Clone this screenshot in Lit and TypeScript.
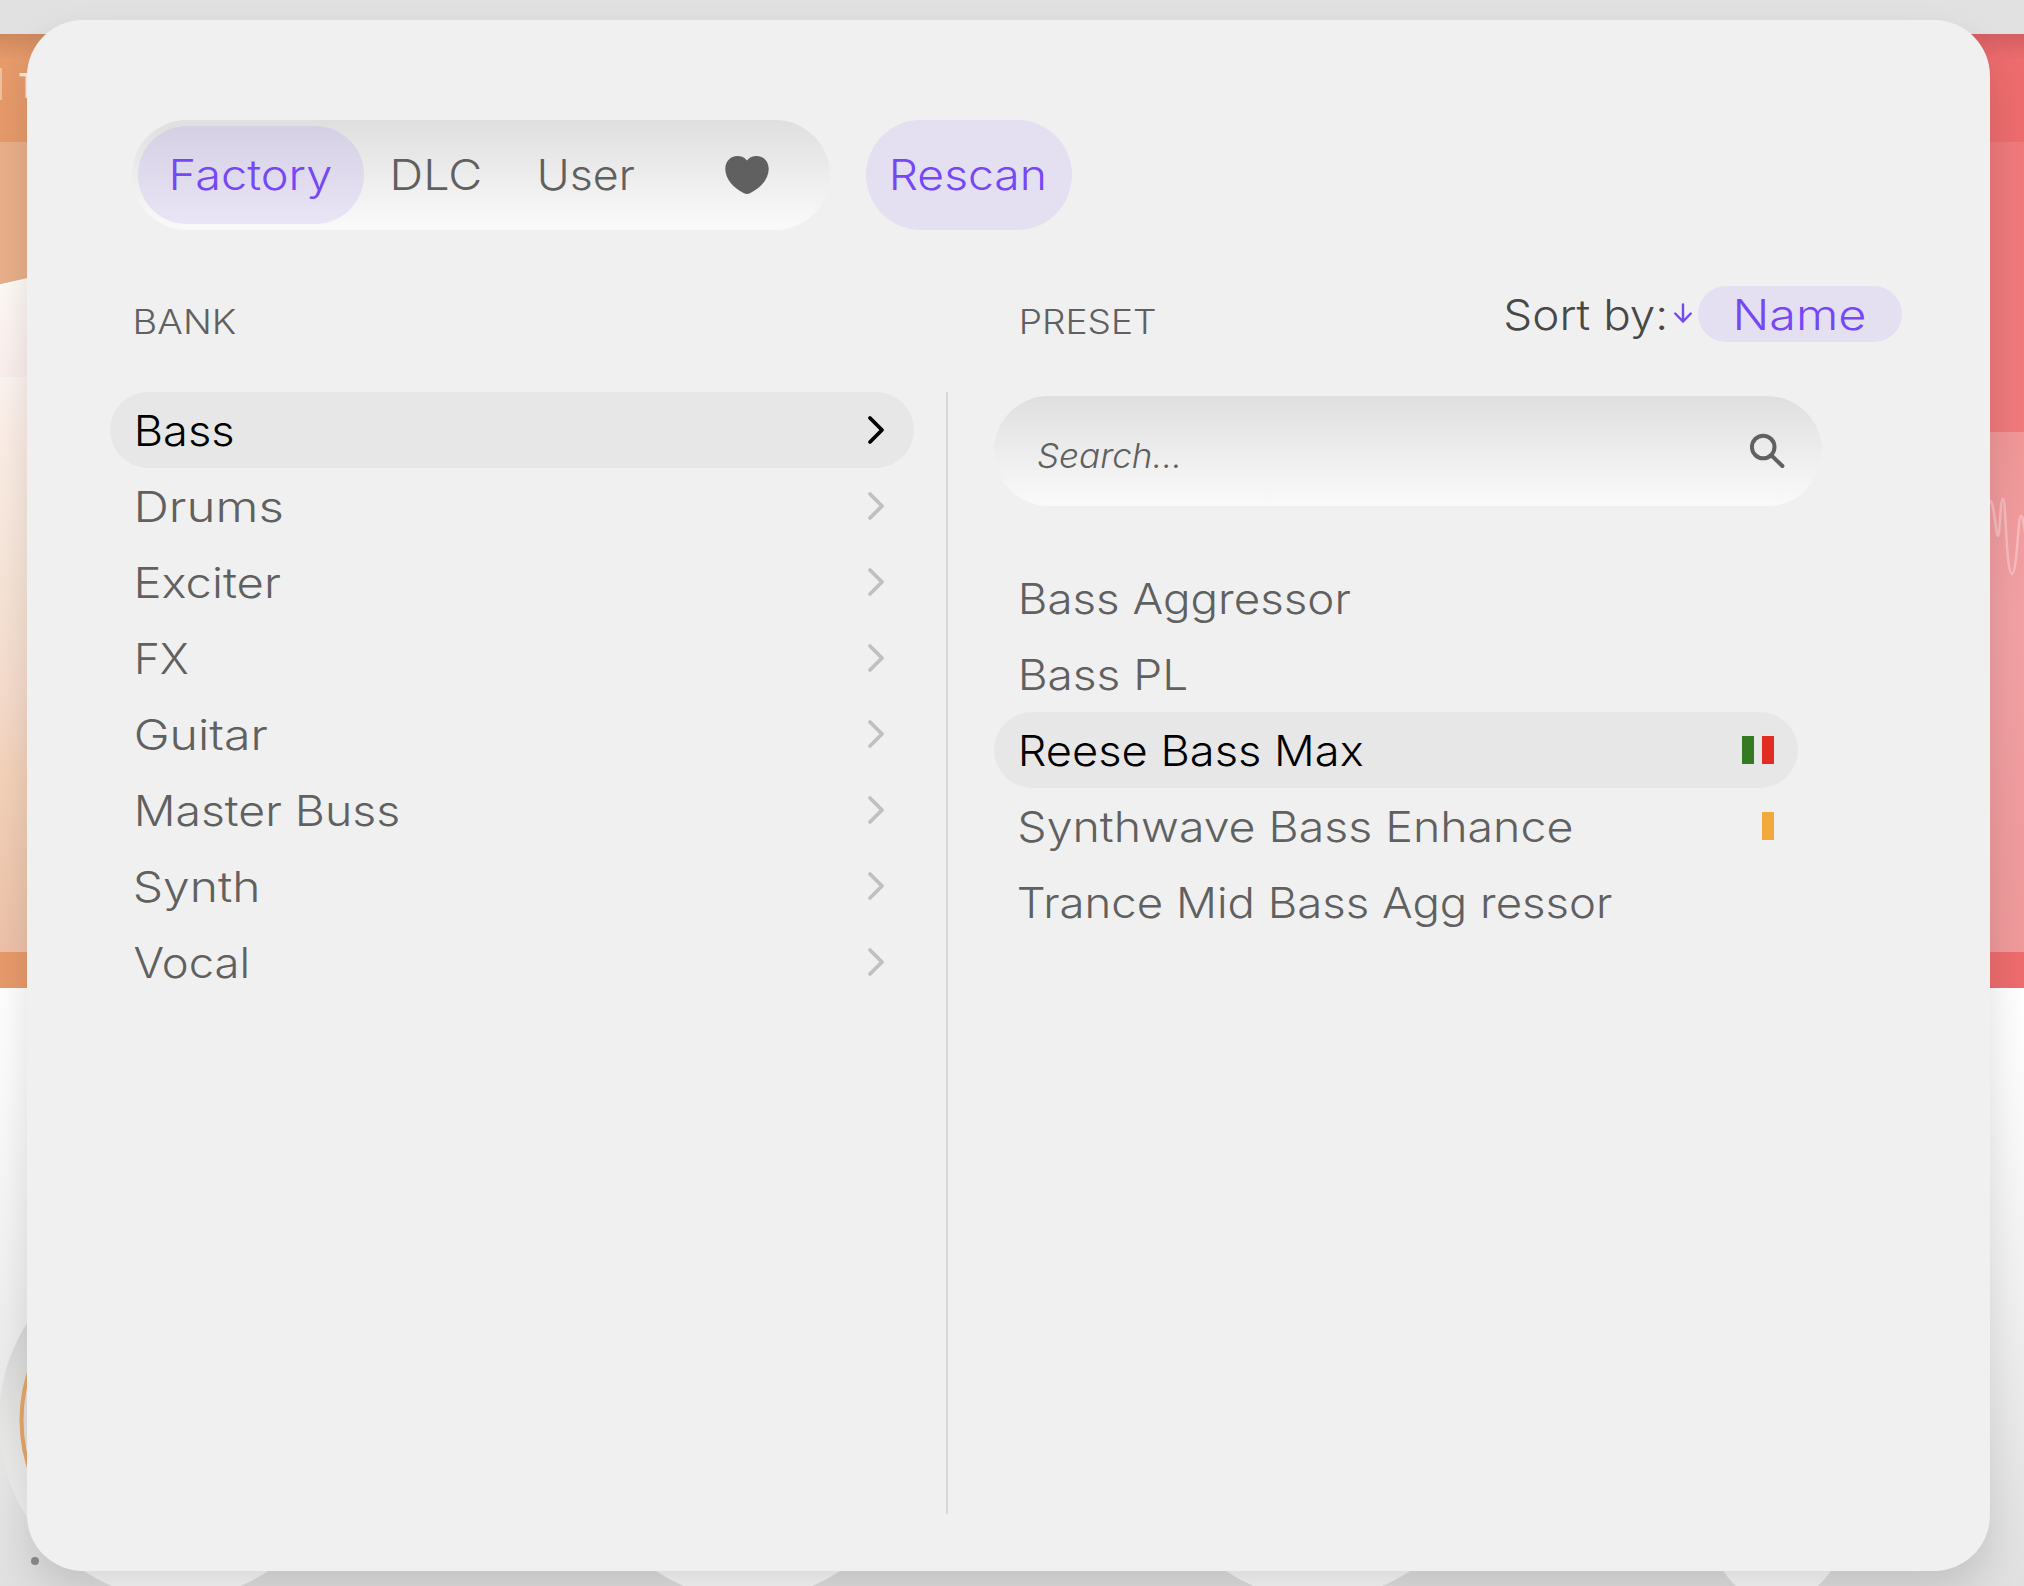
import { LitElement, html, css, svg } from "lit";
import { customElement, property, state } from "lit/decorators.js";
import { classMap } from "lit/directives/class-map.js";
import { styleMap } from "lit/directives/style-map.js";

/** A single-line label whose ink spans exactly `ink` pixels. */
@customElement("fit-label")
export class FitLabel extends LitElement {
  static styles = css`
    :host {
      display: inline-block;
      flex: none;
      text-align: left;
    }
    .text {
      display: inline-block;
      white-space: pre;
      transform-origin: 0 50%;
    }
  `;

  @property() text = "";
  @property({ type: Number }) ink = 100;
  /** Optical offset of the first letter. */
  @property({ type: Number }) nudge = 0;
  @state() private scale = 1;
  @state() private lead = 0;

  updated() {
    const cs = getComputedStyle(this);
    const ctx = document.createElement("canvas").getContext("2d")!;
    ctx.font = `${cs.fontStyle} ${cs.fontWeight} ${cs.fontSize} ${cs.fontFamily}`;
    const m = ctx.measureText(this.text);
    this.scale = this.ink / (m.actualBoundingBoxRight + m.actualBoundingBoxLeft);
    this.lead = m.actualBoundingBoxLeft;
  }

  render() {
    return html`<div style=${styleMap({ width: `${this.ink}px` })}><span
      class="text"
      style=${styleMap({ transform: `translateX(${this.nudge}px) scaleX(${this.scale}) translateX(${this.lead}px)` })}
      >${this.text}</span></div>`;
  }
}

interface Entry {
  name: string;
  ink: number;
  nudge?: number;
  marks?: string[];
}

const BANKS: Entry[] = [
  { name: "Bass", ink: 94.5 },
  { name: "Drums", ink: 143.5 },
  { name: "Exciter", ink: 142.5 },
  { name: "FX", ink: 49.5 },
  { name: "Guitar", ink: 131.5, nudge: -2 },
  { name: "Master Buss", ink: 260 },
  { name: "Synth", ink: 122, nudge: -3 },
  { name: "Vocal", ink: 112.5, nudge: -3.5 },
];

const PRESETS: Entry[] = [
  { name: "Bass Aggressor", ink: 328.5 },
  { name: "Bass PL", ink: 164 },
  { name: "Reese Bass Max", ink: 341, marks: ["green", "red"] },
  { name: "Synthwave Bass Enhance", ink: 552, nudge: -2.5, marks: ["amber"] },
  { name: "Trance Mid Bass Agg ressor", ink: 593, nudge: -3 },
];

@customElement("app-root")
export class AppRoot extends LitElement {
  static styles = css`
    :host {
      display: block;
      position: relative;
      width: 2024px;
      height: 1586px;
      overflow: hidden;
      font-family: Inter, "Open Sans", sans-serif;
      font-weight: 350;
      font-size: 42.6px;
      color: #606060;
    }
    .backdrop {
      position: absolute;
      inset: 0;
      display: block;
    }
    .panel {
      position: absolute;
      left: 27px;
      top: 20px;
      width: 1963px;
      height: 1551px;
      box-sizing: border-box;
      border-radius: 56px;
      background: #f0f0f0;
      box-shadow: 0 20px 40px rgba(0, 0, 0, 0.135);
      padding: 100px 88px 57px 83px;
      display: flex;
      flex-direction: column;
    }
    .toolbar {
      display: flex;
      gap: 36px;
      height: 110px;
      padding-left: 22px;
      line-height: 109px;
    }
    .segments {
      display: flex;
      width: 698px;
      box-sizing: border-box;
      padding: 6px;
      border-radius: 55px;
      background: linear-gradient(#dfdfdf, #fafafa);
      line-height: 97px;
    }
    .segment {
      height: 98px;
      border-radius: 49px;
      box-sizing: border-box;
    }
    .factory {
      width: 226px;
      padding-left: 35px;
      background: linear-gradient(#d5d0e3, #e9e5f7);
      color: #7547f5;
    }
    .dlc {
      width: 146px;
      padding-left: 30px;
    }
    .user {
      width: 180px;
      padding-left: 30px;
    }
    .fav {
      padding-left: 35px;
      display: flex;
      align-items: center;
    }
    .rescan {
      width: 206px;
      border-radius: 55px;
      background: #e4dff1;
      color: #7547f5;
      box-sizing: border-box;
      padding-left: 27px;
    }
    .titles {
      display: grid;
      grid-template-columns: 886px 484px 192px 230px;
      height: 56px;
      margin-top: 56px;
      padding-left: 26px;
      line-height: 58px;
    }
    .title {
      font-size: 33.6px;
      padding-top: 7px;
      margin-left: -0.5px;
    }
    .sort {
      color: #484848;
      display: flex;
      gap: 8px;
    }
    .sort svg {
      margin-top: 17px;
    }
    .sort-key {
      width: 204px;
      height: 56px;
      border-radius: 28px;
      background: #e4dff1;
      color: #7547f5;
      box-sizing: border-box;
      padding-left: 39px;
    }
    .columns {
      flex: 1;
      margin-top: 50px;
      display: grid;
      grid-template-columns: 804px 2px 828px;
      column-gap: 32px;
      min-height: 0;
    }
    .divider {
      background: #d8d8d8;
      height: 1122px;
    }
    .presets {
      padding: 4px 0 0 14px;
    }
    .row {
      width: 804px;
      height: 76px;
      line-height: 77px;
      box-sizing: border-box;
      padding: 0 24px 0 28px;
      border-radius: 38px;
      display: flex;
      justify-content: space-between;
      align-items: center;
      cursor: pointer;
    }
    .row.selected {
      background: #e7e7e7;
      color: #000;
    }
    .chevron {
      stroke: #c0c0c0;
      margin-right: 3px;
    }
    .selected .chevron {
      stroke: #000;
    }
    .search {
      width: 828px;
      height: 110px;
      box-sizing: border-box;
      border-radius: 55px;
      margin-bottom: 54px;
      padding: 0 36px 0 44px;
      background: linear-gradient(#dfdfdf, #fafafa);
      display: flex;
      justify-content: space-between;
      font-size: 34px;
      font-style: italic;
      line-height: 110px;
    }
    .search fit-label {
      padding-top: 5px;
    }
    .search svg {
      margin-top: 36px;
    }
    .marks {
      display: flex;
      gap: 8px;
    }
    .mark {
      width: 12px;
      height: 28px;
    }
    .green {
      background: #347a22;
    }
    .red {
      background: #e12e22;
    }
    .amber {
      background: #f1aa3b;
    }
  `;

  @state() private bank = "Bass";
  @state() private preset = "Reese Bass Max";

  private backdrop() {
    const dials = [176, 748, 1318];
    return html`<svg class="backdrop" width="2024" height="1586" viewBox="0 0 2024 1586">
      <defs>
        <linearGradient id="floor" x1="0" y1="0" x2="0" y2="1">
          <stop offset="0" stop-color="#ffffff" /><stop offset=".12" stop-color="#fdfdfd" />
          <stop offset=".46" stop-color="#f3f3f3" /><stop offset="1" stop-color="#e0e0e0" />
        </linearGradient>
        <linearGradient id="glow" x1="0" y1="279" x2="0" y2="952" gradientUnits="userSpaceOnUse">
          <stop offset="0" stop-color="#fefbf7" /><stop offset=".08" stop-color="#fdf4f1" />
          <stop offset=".145" stop-color="#faefed" /><stop offset=".146" stop-color="#fcf5f1" />
          <stop offset=".24" stop-color="#fceee6" /><stop offset=".48" stop-color="#f7e4d6" />
          <stop offset=".62" stop-color="#f6dccd" /><stop offset=".73" stop-color="#f5d3bb" />
          <stop offset="1" stop-color="#eec2a9" />
        </linearGradient>
        <linearGradient id="shade" x1="0" y1="0" x2="0" y2="1">
          <stop offset="0" stop-opacity=".12" /><stop offset="1" stop-opacity="0" />
        </linearGradient>
        <linearGradient id="pink" x1="0" y1="0" x2="0" y2="1">
          <stop offset="0" stop-color="#f19798" /><stop offset=".35" stop-color="#f3a1a5" />
          <stop offset="1" stop-color="#f09a9b" />
        </linearGradient>
        <linearGradient id="well" x1="0" y1="0" x2="0" y2="1">
          <stop offset=".2" stop-color="#d6d6d6" /><stop offset=".5" stop-color="#e6e6e5" />
          <stop offset=".8" stop-color="#f2f2f2" />
        </linearGradient>
        <clipPath id="upper"><rect width="300" height="1560" /></clipPath>
        <clipPath id="lower"><rect y="1562" width="2024" height="24" /></clipPath>
      </defs>
      <rect width="2024" height="34" fill="#e1e1e1" />
      <rect y="988" width="2024" height="598" fill="url(#floor)" />
      <rect y="34" width="1000" height="954" fill="#e89b6b" />
      <rect y="142" width="1000" height="810" fill="#eab08a" />
      <path d="M0 285L27 279L100 268V952H0Z" fill="url(#glow)" />
      <path d="M0 285L27 279" stroke="#fff" stroke-width="1.5" />
      <rect x="1000" y="34" width="1024" height="954" fill="#ee6c6e" />
      <rect x="1000" y="142" width="1024" height="290" fill="#f07a7c" />
      <rect x="1000" y="432" width="1024" height="520" fill="url(#pink)" />
      <rect y="34" width="2024" height="26" fill="url(#shade)" />
      <rect y="68" width="2" height="32" fill="#f0c0a2" />
      <text x="18.5" y="98" font-size="34" font-weight="450" textLength="17" lengthAdjust="spacingAndGlyphs" fill="#f9ece2">T</text>
      <path d="M1990 501C1994 500 1996 536 1998 536C2000 536 2000 499 2003 499C2006 499 2006 574 2012 574C2017 574 2018 516 2021 516C2023 516 2024 524 2026 540"
        fill="none" stroke="#f6bcbe" stroke-width="2.5" />
      <g clip-path="url(#upper)">
        <circle cx="181" cy="1420" r="182" fill="url(#well)" />
        <circle cx="177" cy="1420" r="155.5" fill="#e4e4e4" stroke="#e8a768" stroke-width="4" />
      </g>
      <g clip-path="url(#lower)">
        ${dials.map((cx) => svg`<circle cx=${cx} cy="1433" r="166" fill="#fafafa" />`)}
        <circle cx="1777" cy="1538" r="63" fill="#fafafa" />
      </g>
      <circle cx="35" cy="1561" r="4" fill="#8c8c8c" />
    </svg>`;
  }

  render() {
    return html`
      ${this.backdrop()}
      <main class="panel">
        <div class="toolbar">
          <div class="segments">
            <div class="segment factory"><fit-label text="Factory" ink="158.5"></fit-label></div>
            <div class="segment dlc"><fit-label text="DLC" ink="86"></fit-label></div>
            <div class="segment user"><fit-label text="User" ink="94.5"></fit-label></div>
            <div class="segment fav">
              <svg width="44" height="40" viewBox="0 0 44 40" fill="#606060">
                <path d="M22 5.4C19.8 2.4 16.2 1 12.4 1C5.4 1 0.3 6.4 0.3 14C0.3 23.6 8 33 19 38.2C21 39.2 23 39.2 25 38.2C36 33 43.7 23.6 43.7 14C43.7 6.4 38.6 1 31.6 1C27.8 1 24.2 2.4 22 5.4Z" />
              </svg>
            </div>
          </div>
          <div class="rescan"><fit-label text="Rescan" ink="150.5"></fit-label></div>
        </div>

        <div class="titles">
          <fit-label class="title" text="BANK" ink="99.5"></fit-label>
          <fit-label class="title" text="PRESET" ink="133"></fit-label>
          <div class="sort">
            <fit-label text="Sort by:" ink="159.5" nudge="-0.5"></fit-label>
            <svg width="18" height="20" viewBox="0 0 18 20" fill="none" stroke="#7547f5" stroke-width="2.4" stroke-linecap="round">
              <path d="M9 1.5V18.5M1.2 10.5L9 18.5L16.8 10.5" />
            </svg>
          </div>
          <div class="sort-key"><fit-label text="Name" ink="127.5"></fit-label></div>
        </div>

        <div class="columns">
          <div class="banks">
            ${BANKS.map(
              (b) => html`<div
                class=${classMap({ row: true, selected: b.name === this.bank })}
                @click=${() => (this.bank = b.name)}
              >
                <fit-label text=${b.name} ink=${b.ink} nudge=${b.nudge ?? 0}></fit-label>
                <svg class="chevron" width="20" height="32" viewBox="0 0 20 32" fill="none" stroke-width="3.8" stroke-linecap="round" stroke-linejoin="round">
                  <path d="M3 4L15 16L3 28" />
                </svg>
              </div>`
            )}
          </div>
          <div class="divider"></div>
          <div class="presets">
            <div class="search">
              <fit-label text="Search..." ink="140.5"></fit-label>
              <svg width="36" height="38" viewBox="0 0 36 38" fill="none" stroke="#606060" stroke-width="4" stroke-linecap="round">
                <circle cx="13.2" cy="15" r="11.3" />
                <path d="M21.8 23.8L32.4 34" />
              </svg>
            </div>
            ${PRESETS.map(
              (p) => html`<div
                class=${classMap({ row: true, selected: p.name === this.preset })}
                @click=${() => (this.preset = p.name)}
              >
                <fit-label text=${p.name} ink=${p.ink} nudge=${p.nudge ?? 0}></fit-label>
                <div class="marks">${(p.marks ?? []).map((m) => html`<span class="mark ${m}"></span>`)}</div>
              </div>`
            )}
          </div>
        </div>
      </main>
    `;
  }
}
